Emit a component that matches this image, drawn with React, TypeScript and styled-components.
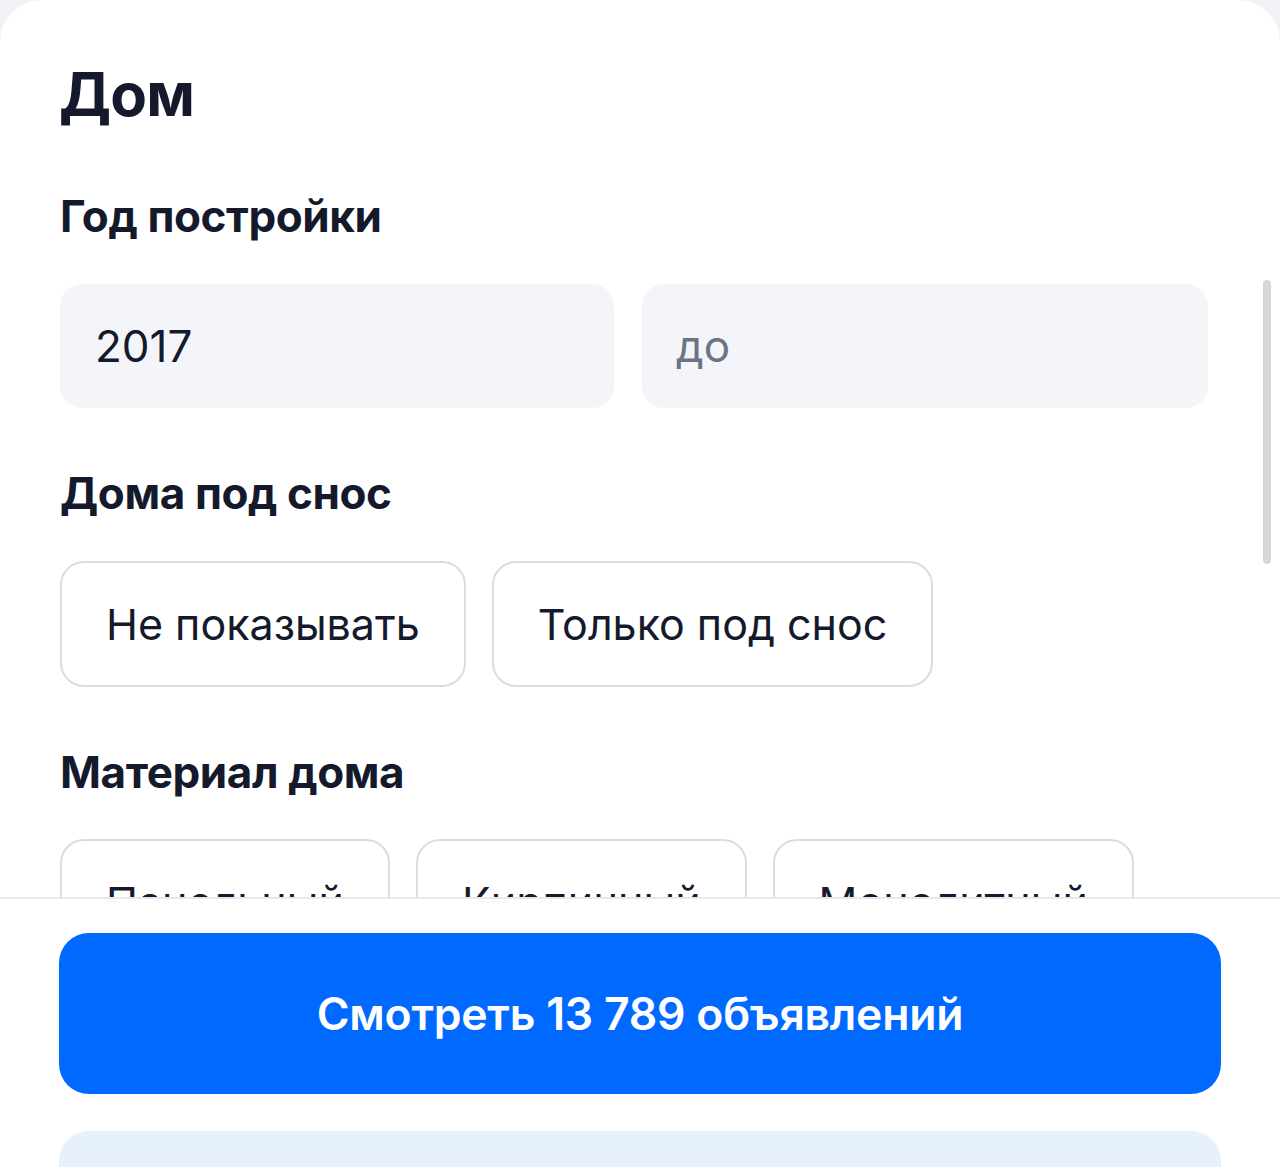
import styled, { createGlobalStyle } from 'styled-components';

const GlobalStyle = createGlobalStyle`
  html, body {
    margin: 0;
    padding: 0;
    background: #f1f2f6;
    font-family: Inter, "Noto Sans", "Liberation Sans", sans-serif;
    -webkit-font-smoothing: antialiased;
  }
  * { box-sizing: border-box; }
`;

const Sheet = styled.div`
  position: relative;
  height: 1167px;
  background: #ffffff;
  border-radius: 42px 42px 0 0;
  display: flex;
  flex-direction: column;
  overflow: hidden;
  color: #141a2b;
`;

const Scroll = styled.div`
  flex: 1 1 auto;
  min-height: 0;
  overflow: hidden;
  padding: 58px 72px 0 60px;
`;

const ScrollThumb = styled.div`
  position: absolute;
  top: 280px;
  right: 9px;
  width: 8px;
  height: 284px;
  border-radius: 4px;
  background: #d5d6d9;
`;

const Title = styled.h1`
  margin: 0 0 60px -1px;
  font-size: 60px;
  line-height: 1.2;
  font-weight: 700;
  letter-spacing: -0.8px;
`;

const Section = styled.section`
  margin-bottom: 59px;
`;

const Heading = styled.h2`
  margin: 0 0 41px;
  font-size: 44px;
  line-height: 1.2;
  font-weight: 700;
  letter-spacing: -0.4px;
`;

const RangeRow = styled.div`
  display: grid;
  grid-template-columns: 554px 1fr;
  gap: 28px;
`;

const Field = styled.div<{ $placeholder?: boolean }>`
  height: 124px;
  border-radius: 22px;
  background: #f3f5f9;
  display: flex;
  align-items: center;
  padding-left: ${(p) => (p.$placeholder ? '34px' : '35px')};
  font-size: 44px;
  font-weight: 400;
  color: ${(p) => (p.$placeholder ? '#6b7385' : '#141a2b')};
`;

const Chips = styled.div`
  display: flex;
  gap: 26px;
`;

const Chip = styled.button`
  flex: 0 0 auto;
  height: 126px;
  padding: 0 44px;
  border: 2px solid #d9dce4;
  border-radius: 24px;
  background: #ffffff;
  font-family: inherit;
  font-size: 43px;
  font-weight: 400;
  color: #141a2b;
  white-space: nowrap;
`;

const Footer = styled.div`
  flex: 0 0 270px;
  overflow: hidden;
  border-top: 2px solid #e6e8ee;
  background: #ffffff;
  padding: 34px 59px 0;
  display: flex;
  flex-direction: column;
  gap: 37px;
`;

const ActionButton = styled.button<{ $secondary?: boolean }>`
  flex: 0 0 161px;
  width: 100%;
  border: none;
  border-radius: 30px;
  background: ${(p) => (p.$secondary ? '#e7f0fd' : '#0069ff')};
  color: ${(p) => (p.$secondary ? '#0069ff' : '#ffffff')};
  font-family: inherit;
  font-size: 44.5px;
  font-weight: 600;
  letter-spacing: -0.2px;
`;

const materials = ['Панельный', 'Кирпичный', 'Монолитный'];

export default function App() {
  return (
    <>
      <GlobalStyle />
      <Sheet>
        <Scroll>
          <Title>Дом</Title>
          <Section>
            <Heading>Год постройки</Heading>
            <RangeRow>
              <Field>2017</Field>
              <Field $placeholder>до</Field>
            </RangeRow>
          </Section>
          <Section>
            <Heading>Дома под снос</Heading>
            <Chips>
              <Chip>Не показывать</Chip>
              <Chip>Только под снос</Chip>
            </Chips>
          </Section>
          <Section>
            <Heading>Материал дома</Heading>
            <Chips>
              {materials.map((m) => (
                <Chip key={m}>{m}</Chip>
              ))}
            </Chips>
          </Section>
        </Scroll>
        <ScrollThumb />
        <Footer>
          <ActionButton>Смотреть 13 789 объявлений</ActionButton>
          <ActionButton $secondary />
        </Footer>
      </Sheet>
    </>
  );
}
